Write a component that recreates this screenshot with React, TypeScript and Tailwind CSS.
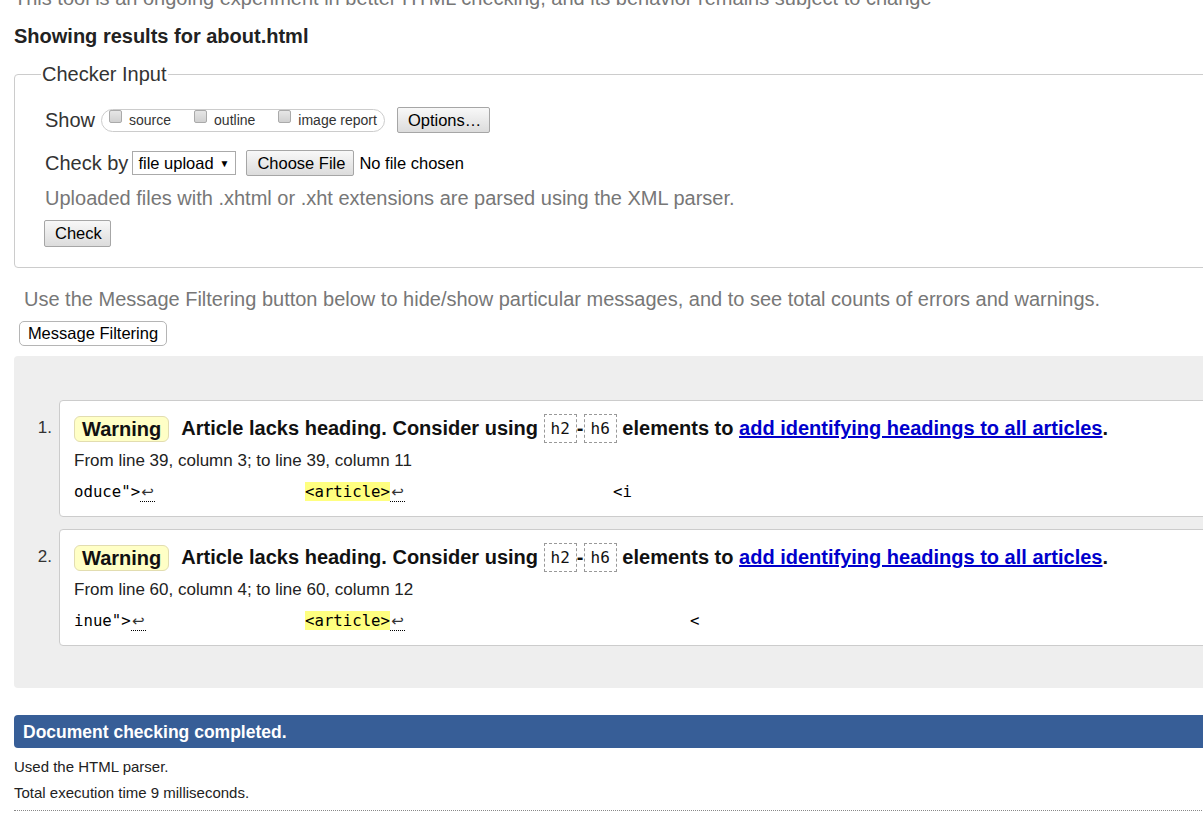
import React from "react";

const mono = "font-['DejaVu_Sans_Mono','Liberation_Mono',monospace]";

const Ret = () => (
  <span className="inline-block w-[15px] leading-[18px] border-b border-dotted border-black text-center text-[#333] text-[15px] font-['DejaVu_Sans',sans-serif]">
    ↩
  </span>
);

const Box = ({ children }: { children: React.ReactNode }) => (
  <span
    className={`inline-block align-middle h-[29px] leading-[27px] px-[6px] border border-dashed border-[#999] font-normal text-[16px] ${mono}`}
  >
    {children}
  </span>
);

const Checkbox = ({ label }: { label: string }) => (
  <span className="flex items-center gap-[7px]">
    <span className="w-[13px] h-[13px] -mt-[8px] rounded-[2px] border border-[#aaa] bg-gradient-to-b from-[#e6e6e6] to-[#d0d0d0]" />
    <span className="text-[14px] text-[#333]">{label}</span>
  </span>
);

const btn =
  "h-[26px] px-[10px] whitespace-nowrap border border-[#a6a6a6] rounded-[2px] bg-gradient-to-b from-[#f8f8f8] to-[#dcdcdc] text-[16.5px] text-black leading-none";

interface Msg {
  n: number;
  where: string;
  pre: string;
  preW: number;
  postW: number;
  tail: string;
}

const messages: Msg[] = [
  { n: 1, where: "From line 39, column 3; to line 39, column 11", pre: 'oduce">', preW: 231, postW: 223, tail: "<i" },
  { n: 2, where: "From line 60, column 4; to line 60, column 12", pre: 'inue">', preW: 231, postW: 300, tail: "<" },
];

const Message = ({ m }: { m: Msg }) => (
  <li className="flex">
    <div className="w-[45px] shrink-0 pr-[7px] mt-[13px] h-[29px] flex items-center justify-end text-[17px] text-[#333]">
      {m.n}.
    </div>
    <div className="flex-1 bg-white border border-[#ccc] rounded-[4px] pl-[14px] pt-[12px] pb-[13px]">
      <div className="h-[29px] leading-[29px] whitespace-nowrap font-bold text-[20px] text-[#111]">
        <span className="inline-block align-middle h-[26px] leading-[24px] px-[7px] mr-[12px] rounded-[6px] border border-[#e2ddb0] bg-[#ffffc6]">
          Warning
        </span>
        <span className="align-middle">Article lacks heading. Consider using </span>
        <Box>h2</Box>
        <span className="align-middle">-</span>
        <Box>h6</Box>
        <span className="align-middle">
          {" "}elements to{" "}
          <a href="#" className="text-[#0000cc] underline">
            add identifying headings to all articles
          </a>
          .
        </span>
      </div>
      <div className="mt-[9px] leading-[20px] text-[17px] text-[#222]">{m.where}</div>
      <div className={`mt-[10px] h-[22px] leading-[22px] text-[15.7px] text-black whitespace-pre ${mono}`}>
        <span className="inline-block" style={{ width: m.preW }}>
          {m.pre}
          <Ret />
        </span>
        <span className="bg-[#ffff80]">{"<article>"}</span>
        <span className="inline-block" style={{ width: m.postW }}>
          <Ret />
        </span>
        <span>{m.tail}</span>
      </div>
    </div>
  </li>
);

export default function App() {
  return (
    <div className="w-[1203px] h-[820px] overflow-hidden bg-white font-['Liberation_Sans',Arial,sans-serif] text-[#222]">
      <div className="w-[1300px] pl-[14px]">
        <p className="-mt-[14px] leading-[24px] text-[20px] text-[#777] whitespace-nowrap">
          This tool is an ongoing experiment in better HTML checking, and its behavior remains subject to change
        </p>
        <h2 className="mt-[14px] leading-[24px] text-[20px] font-bold text-[#222]">
          Showing results for about.html
        </h2>

        <fieldset className="mt-[15px] border border-[#ccc] rounded-[4px] pl-[30px] pb-[20px]">
          <legend className="-ml-[4px] px-[1px] leading-[22px] text-[20px] text-[#333]">Checker Input</legend>
          <div className="mt-[22px] h-[26px] flex items-center">
            <span className="text-[20px] text-[#333]">Show</span>
            <div className="ml-[6px] h-[23px] flex items-center gap-[23px] pl-[7px] pr-[7px] rounded-full border border-[#ccc]">
              <Checkbox label="source" />
              <Checkbox label="outline" />
              <Checkbox label="image report" />
            </div>
            <button className={`${btn} ml-[12px] w-[93px] px-0`}>Options…</button>
          </div>
          <div className="mt-[17px] h-[26px] flex items-center">
            <span className="text-[20px] text-[#333]">Check by</span>
            <span className="ml-[4px] h-[24px] w-[104px] flex items-center gap-[6px] pl-[5px] border border-[#aaa] bg-white text-[16.5px] text-black">
              file upload <span className="text-[10px]">▼</span>
            </span>
            <button className={`${btn} ml-[10px] w-[108px] px-0`}>Choose File</button>
            <span className="ml-[5px] text-[16.5px] text-black">No file chosen</span>
          </div>
          <p className="mt-[10px] leading-[24px] text-[20px] text-[#777]">
            Uploaded files with .xhtml or .xht extensions are parsed using the XML parser.
          </p>
          <button className={`${btn} mt-[10px] -ml-[1px] h-[27px] w-[67px] px-0`}>Check</button>
        </fieldset>

        <p className="mt-[19px] pl-[10px] leading-[24px] text-[20px] text-[#777] whitespace-nowrap">
          Use the Message Filtering button below to hide/show particular messages, and to see total counts of errors and warnings.
        </p>
        <button className="mt-[10px] ml-[5px] h-[25px] w-[148px] whitespace-nowrap rounded-[5px] border border-[#b5b5b5] bg-white text-[16.5px] text-black leading-none">
          Message Filtering
        </button>

        <div className="mt-[10px] bg-[#eee] rounded-[4px] pt-[44px] pb-[42px]">
          <ol className="flex flex-col gap-[12px]">
            {messages.map((m) => (
              <Message key={m.n} m={m} />
            ))}
          </ol>
        </div>

        <div className="mt-[27px] h-[33px] flex items-center pl-[9px] rounded-[4px] bg-[#375e97] text-white font-bold text-[17.5px]">
          Document checking completed.
        </div>
        <p className="mt-[6px] leading-[26px] text-[15px] text-[#222]">Used the HTML parser.</p>
        <p className="leading-[26px] text-[15px] text-[#222]">Total execution time 9 milliseconds.</p>
        <div className="mt-[4px] border-t border-dotted border-[#888]" />
      </div>
    </div>
  );
}
